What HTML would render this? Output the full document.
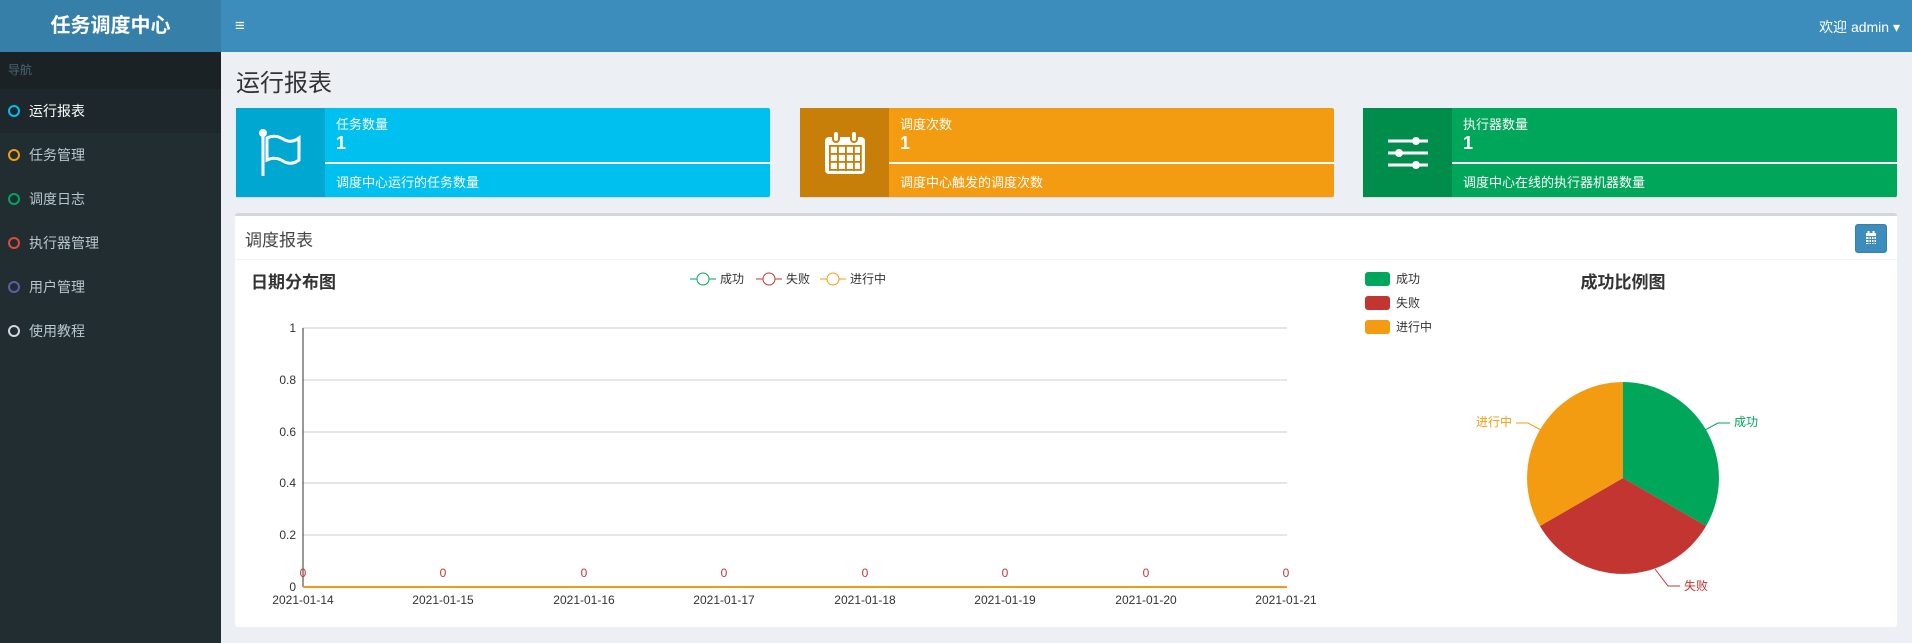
<!DOCTYPE html>
<html><head><meta charset="utf-8"><style>
*{box-sizing:border-box;margin:0;padding:0}
body{width:1912px;height:643px;overflow:hidden;background:#ecf0f5;font-family:"Liberation Sans","Noto Sans CJK SC",sans-serif;position:relative}
.abs{position:absolute}
.logo{left:0;top:0;width:221px;height:52px;background:#367fa9;color:#fff;font-weight:bold;font-size:20px;text-align:center;line-height:52px}
.nav{left:221px;top:0;right:0;height:52px;background:#3c8dbc;color:#fff}
.side{left:0;top:52px;width:221px;bottom:0;background:#222d32}
.mhead{height:37px;background:#1a2226;color:#4b646f;font-size:12px;line-height:37px;padding-left:8px}
.mi{height:44px;line-height:44px;color:#b8c7ce;font-size:14px;padding-left:29px;position:relative}
.mi.act{background:#1e282c;color:#fff}
.mi i{position:absolute;left:8px;top:16px;width:12px;height:12px;border:2px solid;border-radius:50%}
.ib{top:108px;height:89px;color:#fff;border-radius:2px;box-shadow:0 1px 1px rgba(0,0,0,.1)}
.ib .ic{position:absolute;left:0;top:0;width:89px;height:89px;display:flex;align-items:center;justify-content:center}
.ib .t{position:absolute;left:100px;top:6px;font-size:13px}
.ib .n{position:absolute;left:100px;top:25px;font-size:18px;font-weight:bold}
.ib .line{position:absolute;left:89px;right:0;top:54px;height:2px;background:#fff}
.ib .d{position:absolute;left:100px;top:64px;font-size:13px}
.box{left:235px;top:213px;width:1662px;height:414px;background:#fff;border-top:3px solid #d2d6de;border-radius:3px}
</style></head><body>
<div class="abs logo">任务调度中心</div>
<div class="abs nav"><span class="abs" style="left:14px;top:16px;font-size:17px">&#8801;</span><span class="abs" style="right:12px;top:17px;font-size:14px">欢迎 admin ▾</span></div>
<div class="abs side">
<div class="mhead">导航</div>
<div class="mi act"><i style="color:#00c0ef"></i>运行报表</div>
<div class="mi"><i style="color:#f39c12"></i>任务管理</div>
<div class="mi"><i style="color:#00a65a"></i>调度日志</div>
<div class="mi"><i style="color:#dd4b39"></i>执行器管理</div>
<div class="mi"><i style="color:#605ca8"></i>用户管理</div>
<div class="mi"><i style="color:#d2d6de"></i>使用教程</div>
</div>
<div class="abs" style="left:236px;top:63px;font-size:24px;color:#333">运行报表</div>

<div class="abs ib" style="left:236px;width:534px;background:#00c0ef">
<div class="ic" style="background:#00a7d0"><svg width="44" height="50" viewBox="0 0 44 50" fill="none" stroke="#fff" stroke-width="3"><circle cx="4" cy="5" r="2.5" fill="#fff"/><line x1="4" y1="7" x2="4" y2="48"/><path d="M8 10 Q16 6 24 11 Q32 16 40 10 V32 Q32 38 24 33 Q16 28 8 32 Z"/></svg></div>
<div class="t">任务数量</div><div class="n">1</div><div class="line"></div><div class="d">调度中心运行的任务数量</div></div>

<div class="abs ib" style="left:800px;width:534px;background:#f39c12">
<div class="ic" style="background:#c87f0a"><svg width="42" height="44" viewBox="0 0 42 44"><rect x="1" y="6" width="40" height="37" rx="4" fill="#fff"/><rect x="9" y="0" width="6" height="11" rx="3" fill="#fff" stroke="#c87f0a" stroke-width="2"/><rect x="27" y="0" width="6" height="11" rx="3" fill="#fff" stroke="#c87f0a" stroke-width="2"/><g fill="#c87f0a"><rect x="5" y="14" width="32" height="1.8"/><rect x="5" y="22" width="32" height="1.8"/><rect x="5" y="30" width="32" height="1.8"/><rect x="5" y="38" width="32" height="1.8"/><rect x="5" y="14" width="1.8" height="26"/><rect x="13" y="14" width="1.8" height="26"/><rect x="21" y="14" width="1.8" height="26"/><rect x="29" y="14" width="1.8" height="26"/><rect x="36" y="14" width="1.8" height="26"/></g></svg></div>
<div class="t">调度次数</div><div class="n">1</div><div class="line"></div><div class="d">调度中心触发的调度次数</div></div>

<div class="abs ib" style="left:1363px;width:534px;background:#00a65a">
<div class="ic" style="background:#008d4c"><svg width="42" height="34" viewBox="0 0 42 34" stroke="#fff" stroke-width="3" fill="#fff"><line x1="1" y1="5" x2="41" y2="5"/><line x1="1" y1="17" x2="41" y2="17"/><line x1="1" y1="29" x2="41" y2="29"/><circle cx="29" cy="5" r="2.5"/><circle cx="12" cy="17" r="2.5"/><circle cx="29" cy="29" r="2.5"/></svg></div>
<div class="t">执行器数量</div><div class="n">1</div><div class="line"></div><div class="d">调度中心在线的执行器机器数量</div></div>

<div class="abs box">
<div style="height:44px;border-bottom:1px solid #f4f4f4;font-size:17px;color:#444;padding:10px 10px">调度报表</div>
<div class="abs" style="right:10px;top:8px;width:32px;height:29px;background:#3c8dbc;border:1px solid #367fa9;border-radius:3px"><svg width="30" height="27" viewBox="0 0 30 27"><rect x="10" y="8" width="10" height="11" fill="#fff"/><g fill="#3c8dbc"><rect x="10" y="11" width="10" height="1"/><rect x="10" y="14" width="10" height="1"/><rect x="10" y="17" width="10" height="1"/><rect x="12.5" y="11" width="1" height="8"/><rect x="15" y="11" width="1" height="8"/><rect x="17.5" y="11" width="1" height="8"/></g><rect x="11.5" y="6" width="2" height="4" fill="#fff"/><rect x="16.5" y="6" width="2" height="4" fill="#fff"/></svg></div>
</div>

<svg class="abs" style="left:0;top:0" width="1912" height="643" font-family="Liberation Sans,Noto Sans CJK SC,sans-serif">
<text x="251" y="288" font-size="17" font-weight="bold" fill="#333">日期分布图</text>
<g font-size="12" fill="#333">
<line x1="690" y1="279" x2="716" y2="279" stroke="#00a65a"/><circle cx="703" cy="279" r="6" fill="#fff" stroke="#00a65a"/><text x="720" y="283">成功</text>
<line x1="756" y1="279" x2="782" y2="279" stroke="#c23531"/><circle cx="769" cy="279" r="6" fill="#fff" stroke="#c23531"/><text x="786" y="283">失败</text>
<line x1="820" y1="279" x2="846" y2="279" stroke="#f39c12"/><circle cx="833" cy="279" r="6" fill="#fff" stroke="#f39c12"/><text x="850" y="283">进行中</text>
</g>
<g stroke="#ccc"><line x1="303" y1="328" x2="1287" y2="328"/><line x1="303" y1="380" x2="1287" y2="380"/><line x1="303" y1="432" x2="1287" y2="432"/><line x1="303" y1="483" x2="1287" y2="483"/><line x1="303" y1="535" x2="1287" y2="535"/></g>
<line x1="303" y1="328" x2="303" y2="587" stroke="#333"/>
<g font-size="12" fill="#333" text-anchor="end"><text x="296" y="332">1</text><text x="296" y="384">0.8</text><text x="296" y="436">0.6</text><text x="296" y="487">0.4</text><text x="296" y="539">0.2</text><text x="296" y="591">0</text></g>
<line x1="303" y1="587" x2="1287" y2="587" stroke="#f39c12" stroke-width="2"/>
<g font-size="12" fill="#333" text-anchor="middle">
<text x="303" y="604">2021-01-14</text><text x="443" y="604">2021-01-15</text><text x="584" y="604">2021-01-16</text><text x="724" y="604">2021-01-17</text><text x="865" y="604">2021-01-18</text><text x="1005" y="604">2021-01-19</text><text x="1146" y="604">2021-01-20</text><text x="1286" y="604">2021-01-21</text></g>
<g font-size="12" fill="#c23531" text-anchor="middle">
<text x="303" y="577">0</text><text x="443" y="577">0</text><text x="584" y="577">0</text><text x="724" y="577">0</text><text x="865" y="577">0</text><text x="1005" y="577">0</text><text x="1146" y="577">0</text><text x="1286" y="577">0</text></g>

<g font-size="12" fill="#333">
<rect x="1365" y="272" width="25" height="14" rx="3" fill="#00a65a"/><text x="1396" y="283">成功</text>
<rect x="1365" y="296" width="25" height="14" rx="3" fill="#c23531"/><text x="1396" y="307">失败</text>
<rect x="1365" y="320" width="25" height="14" rx="3" fill="#f39c12"/><text x="1396" y="331">进行中</text></g>
<text x="1623" y="288" font-size="17" font-weight="bold" fill="#333" text-anchor="middle">成功比例图</text>
<path d="M1623 478 L1623 382 A96 96 0 0 1 1706.1 526 Z" fill="#00a65a"/>
<path d="M1623 478 L1706.1 526 A96 96 0 0 1 1539.9 526 Z" fill="#c23531"/>
<path d="M1623 478 L1539.9 526 A96 96 0 0 1 1623 382 Z" fill="#f39c12"/>
<path d="M1705 430 L1718 423 L1730 423" fill="none" stroke="#00a65a"/><text x="1734" y="426" font-size="12" fill="#00a65a">成功</text>
<path d="M1655 569 L1668 586 L1680 586" fill="none" stroke="#c23531"/><text x="1684" y="590" font-size="12" fill="#c23531">失败</text>
<path d="M1541 430 L1528 423 L1516 423" fill="none" stroke="#f39c12"/><text x="1512" y="426" font-size="12" fill="#f39c12" text-anchor="end">进行中</text>
</svg>
</body></html>
